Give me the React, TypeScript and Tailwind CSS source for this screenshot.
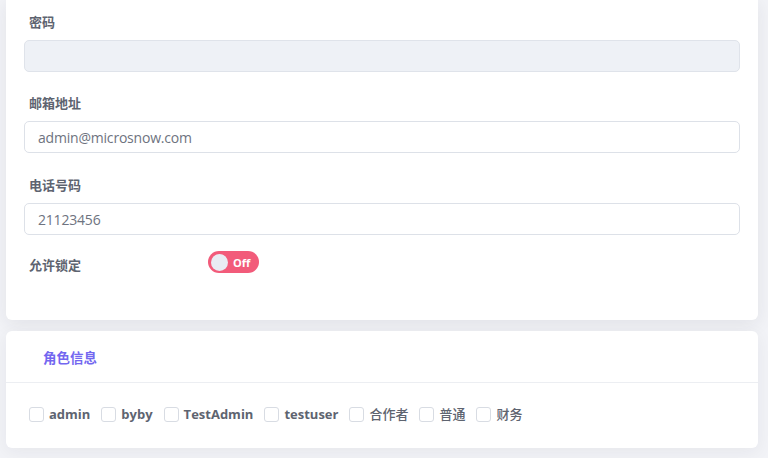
import React from "react";

const font = { fontFamily: '"Open Sans", "Noto Sans CJK SC", sans-serif' };

function Field({ label, value, disabled, className }: { label: string; value?: string; disabled?: boolean; className?: string }) {
  return (
    <div className={className}>
      <div className="pl-[5px] text-[13px] leading-[18px] font-bold text-[#5e6470]">{label}</div>
      <div
        className={
          "mt-[9px] h-[32px] rounded-[5px] border flex items-center px-[13px] text-[14px] tracking-[-0.2px] text-[#6e7380] " +
          (disabled ? "bg-[#eef1f6] border-[#dfe3ea]" : "bg-white border-[#dde1e8]")
        }
      >
        {value}
      </div>
    </div>
  );
}

const roles = [
  { name: "admin", latin: true },
  { name: "byby", latin: true },
  { name: "TestAdmin", latin: true },
  { name: "testuser", latin: true },
  { name: "合作者", latin: false },
  { name: "普通", latin: false },
  { name: "财务", latin: false },
];

export default function App() {
  return (
    <div className="w-[768px] h-[458px] overflow-hidden bg-[#f2f3f7] pl-[6px] pr-[10px]" style={font}>
      <div className="h-[320px] bg-white rounded-b-[6px] shadow-[0_4px_18px_0_rgba(34,41,47,0.08)] px-[18px] pt-[13px]">
        <Field label="密码" disabled />
        <Field label="邮箱地址" value="admin@microsnow.com" className="mt-[22px]" />
        <Field label="电话号码" value="21123456" className="mt-[23px]" />
        <div className="mt-[16px] flex items-start">
          <div className="w-[184px] pl-[5px] pt-[5px] text-[13px] leading-[18px] font-bold text-[#5e6470]">允许锁定</div>
          <div className="w-[51px] h-[22px] rounded-full bg-[#f25b7a] flex items-center pl-[3px]">
            <div className="w-[17px] h-[17px] rounded-full bg-[#e9ecf3]" />
            <span className="ml-[5px] text-[11px] font-bold text-white leading-none">Off</span>
          </div>
        </div>
      </div>
      <div className="mt-[11px] h-[117px] bg-white rounded-[6px] shadow-[0_4px_18px_0_rgba(34,41,47,0.06)]">
        <div className="h-[52px] border-b border-[#eceef2] flex items-center pl-[37px] pt-[4px] text-[13.5px] font-bold text-[#7367f0]">
          角色信息
        </div>
        <div className="flex items-center pl-[23px] pt-[22px]">
          {roles.map((r) => (
            <div key={r.name} className="flex items-center mr-[11px]">
              <div className="w-[15px] h-[15px] rounded-[3px] border border-[#d8dce3] bg-white" />
              <span
                className={
                  "ml-[5px] text-[13px] leading-[18px] text-[#5e6470] " + (r.latin ? "font-bold" : "font-medium")
                }
              >
                {r.name}
              </span>
            </div>
          ))}
        </div>
      </div>
    </div>
  );
}
